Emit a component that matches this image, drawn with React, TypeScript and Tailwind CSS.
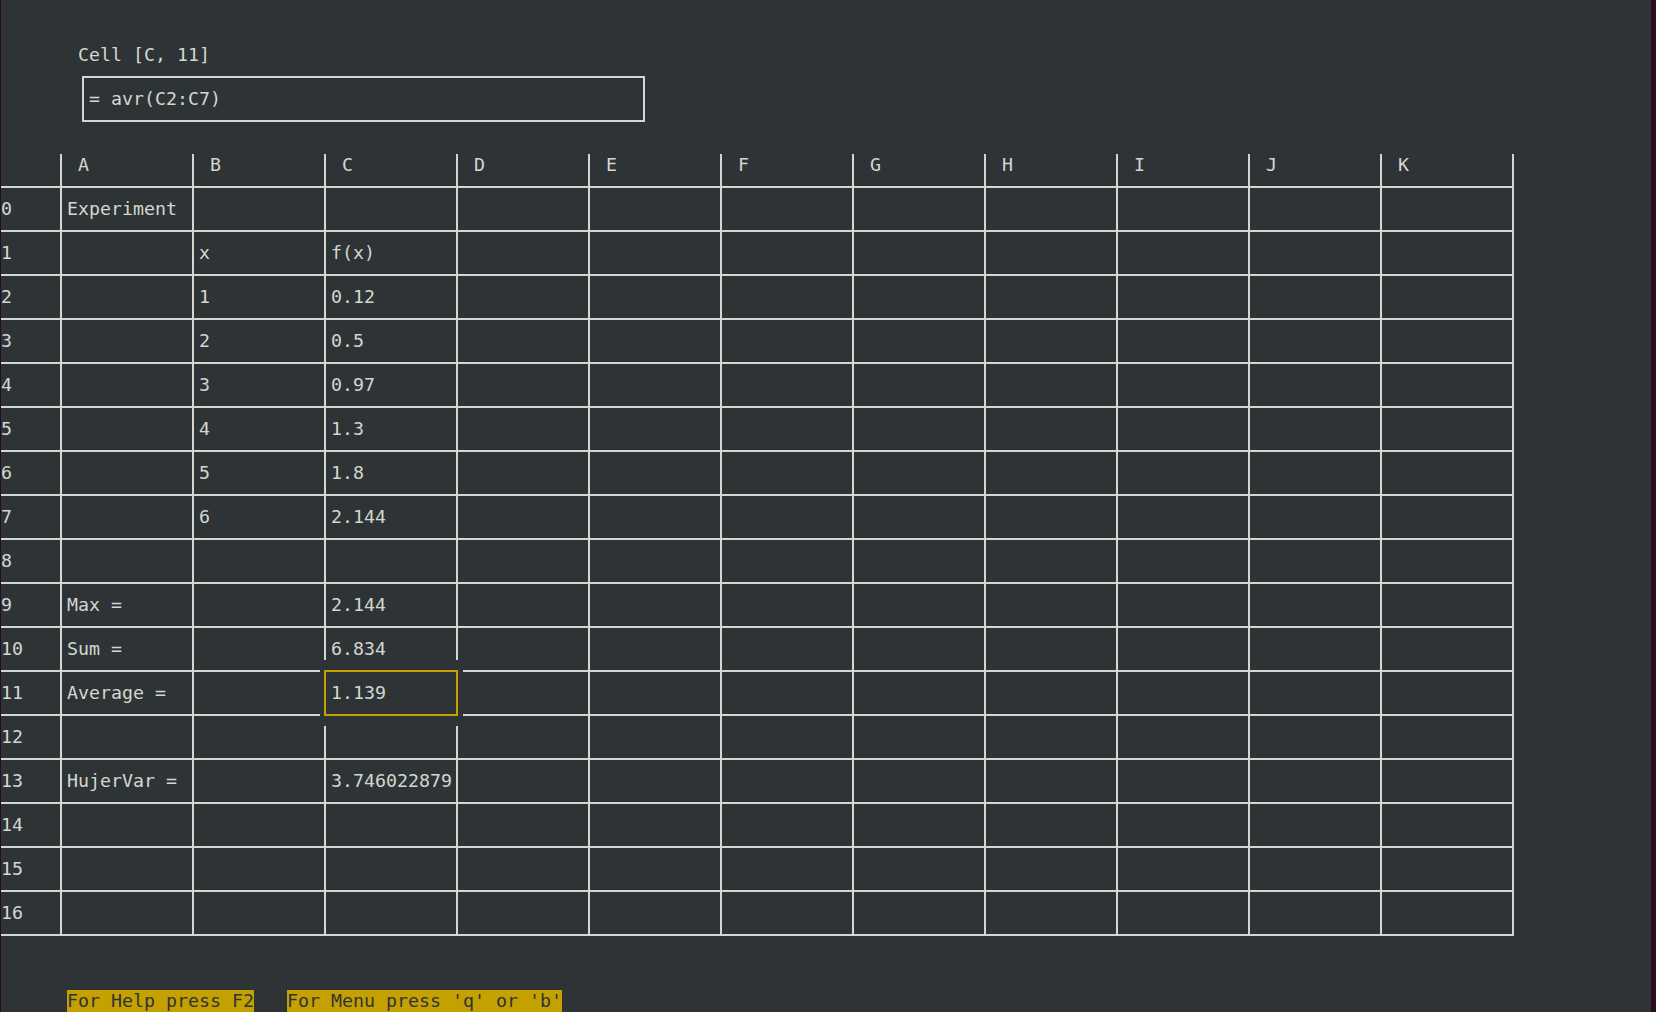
import React from "react"

const cols = ["A", "B", "C", "D", "E", "F", "G", "H", "I", "J", "K"]

// row -> { colIndex: text }
const data: Record<number, Record<number, string>> = {
    0: { 0: "Experiment" },
    1: { 1: "x", 2: "f(x)" },
    2: { 1: "1", 2: "0.12" },
    3: { 1: "2", 2: "0.5" },
    4: { 1: "3", 2: "0.97" },
    5: { 1: "4", 2: "1.3" },
    6: { 1: "5", 2: "1.8" },
    7: { 1: "6", 2: "2.144" },
    9: { 0: "Max =", 2: "2.144" },
    10: { 0: "Sum =", 2: "6.834" },
    11: { 0: "Average =" },
    13: { 0: "HujerVar =", 2: "3.746022879" },
}

const rows = Array.from({ length: 17 }, (_, i) => i)

function SelectedCell({ value }: { value: string }) {
    return (
        <div className="relative w-[132px] h-[42px] border-l-2 border-[#d3d7cf]">
            {/* selection frame, clears the grid lines around it */}
            <div className="absolute left-[-6px] top-[-12px] w-[143px] h-[66px] bg-[#2e3436]">
                <div className="absolute left-[4px] top-[10px] w-[134px] h-[46px] border-2 border-[#c4a000] flex items-center pl-[5px]">
                    {value}
                </div>
            </div>
        </div>
    )
}

export default function App() {
    return (
        <div
            className="w-[1656px] h-[1012px] overflow-hidden bg-[#2e3436] border-l border-r-[5px] border-[#2c0a22] text-[#d3d7cf] text-[18.27px] leading-[22px] whitespace-pre flex flex-col"
            style={{ fontFamily: '"DejaVu Sans Mono", "Liberation Mono", monospace' }}
        >
            {/* cell address + formula */}
            <div className="pt-[44px] pl-[77px] h-[66px]">Cell [C, 11]</div>
            <div className="mt-[10px] ml-[81px] w-[563px] h-[46px] border-2 border-[#d3d7cf] flex items-center pl-[5px]">
                = avr(C2:C7)
            </div>

            {/* sheet */}
            <div className="mt-[32px] flex flex-col">
                <div className="flex w-fit border-b-2 border-r-2 border-[#d3d7cf]">
                    <div className="w-[59px] h-[32px]" />
                    {cols.map((c) => (
                        <div key={c} className="w-[132px] h-[32px] border-l-2 border-[#d3d7cf] pl-[16px]">
                            {c}
                        </div>
                    ))}
                </div>

                {rows.map((r) => (
                    <div key={r} className="flex w-fit border-b-2 border-r-2 border-[#d3d7cf]">
                        <div className="w-[59px] h-[42px] flex items-center">{r}</div>
                        {cols.map((c, ci) =>
                            r === 11 && ci === 2 ? (
                                <SelectedCell key={c} value="1.139" />
                            ) : (
                                <div key={c} className="w-[132px] h-[42px] border-l-2 border-[#d3d7cf] pl-[5px] flex items-center">
                                    {data[r]?.[ci] ?? ""}
                                </div>
                            )
                        )}
                    </div>
                ))}
            </div>

            {/* status bar */}
            <div className="mt-[54px] ml-[66px] h-[22px] flex gap-[33px]">
                <span className="bg-[#c4a000] text-[#2e3436]">For Help press F2</span>
                <span className="bg-[#c4a000] text-[#2e3436]">For Menu press 'q' or 'b'</span>
            </div>
        </div>
    )
}
